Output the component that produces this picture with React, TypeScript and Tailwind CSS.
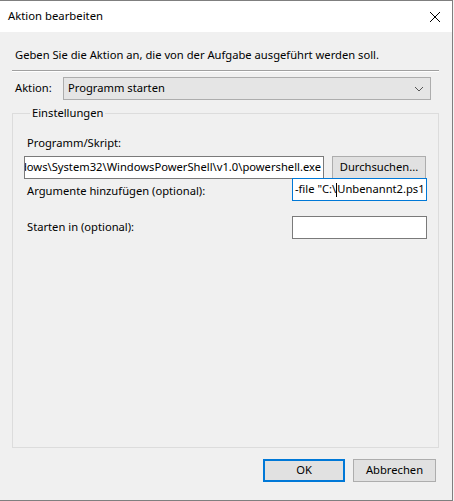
import React from "react";

const font = { fontFamily: '"Noto Sans", "Liberation Sans", sans-serif' };

function TextBox({
  children,
  focused,
  className,
}: {
  children?: React.ReactNode;
  focused?: boolean;
  className?: string;
}) {
  return (
    <div
      className={
        "flex h-[23px] items-center overflow-hidden whitespace-nowrap bg-white px-[2px] text-black " +
        (focused ? "border border-[#0078d7] " : "border border-[#7a7a7a] ") +
        (className ?? "")
      }
    >
      {children}
    </div>
  );
}

export default function App() {
  return (
    <div className="flex h-[501px] w-[454px] bg-[#f4f4f4]" style={font}>
      <div className="flex h-[501px] w-[453px] flex-col border-b border-r border-t border-[#7f7f7f]">
        {/* title bar */}
        <div className="flex h-[31px] items-center justify-between bg-white pl-[8px] pr-[10px]">
          <span className="text-[11.3px] text-black">Aktion bearbeiten</span>
          <svg width="12" height="12" viewBox="0 0 12 12" className="mr-[1px]">
            <path d="M1 1 L11 11 M11 1 L1 11" stroke="#000" strokeWidth="1" />
          </svg>
        </div>

        {/* body */}
        <div className="flex flex-1 flex-col bg-[#f0f0f0] px-[12px] text-[11.2px] text-black">
          <p className="mt-[15px] pl-[3px] leading-[16px]">
            Geben Sie die Aktion an, die von der Aufgabe ausgeführt werden soll.
          </p>
          <div className="mt-[7px] h-[2px] w-[427px] border-t border-[#a0a0a0] bg-white" />

          <div className="mt-[5px] flex items-center">
            <span className="w-[51px] pl-[3px]">Aktion:</span>
            <div className="flex h-[23px] w-[368px] items-center justify-between border border-[#adadad] bg-[#e5e5e5] pl-[4px] pr-[6px]">
              <span>Programm starten</span>
              <svg width="10" height="6" viewBox="0 0 10 6">
                <path d="M1 1 L5 5 L9 1" stroke="#555" strokeWidth="1" fill="none" />
              </svg>
            </div>
          </div>

          <fieldset className="mt-[5px] h-[343px] w-[427px] border border-[#dcdcdc] pl-[11px] pr-[12px]">
            <legend className="ml-[6px] px-[2px] leading-[16px]">Einstellungen</legend>

            <div className="mt-[14px] pl-[3px] leading-[16px]">Programm/Skript:</div>
            <div className="mt-[5px] flex items-center gap-[8px]">
              <TextBox className="w-[300px] justify-end">
                <span className="shrink-0">C:\Windows\System32\WindowsPowerShell\v1.0\powershell.exe</span>
              </TextBox>
              <button className="flex h-[23px] w-[94px] items-center justify-center border border-[#adadad] bg-[#e1e1e1]">
                Durchsuchen...
              </button>
            </div>

            <div className="-mt-[1px] flex items-center justify-between">
              <span className="pl-[3px] pt-[3px]">Argumente hinzufügen (optional):</span>
              <TextBox focused className="mr-[-1px] w-[135px]">
                <span className="shrink-0">-file "C:\</span>
                <span className="h-[14px] w-[1px] shrink-0 bg-black" />
                <span className="shrink-0">Unbenannt2.ps1</span>
              </TextBox>
            </div>

            <div className="mt-[15px] flex items-center justify-between">
              <span className="pl-[3px]">Starten in (optional):</span>
              <TextBox className="mr-[-1px] w-[135px]" />
            </div>
          </fieldset>

          <div className="mt-[11px] flex justify-end gap-[8px] pr-[4px]">
            <button className="flex h-[23px] w-[82px] items-center justify-center border-2 border-[#0078d7] bg-[#e1e1e1]">
              OK
            </button>
            <button className="flex h-[23px] w-[83px] items-center justify-center border border-[#adadad] bg-[#e1e1e1]">
              Abbrechen
            </button>
          </div>
        </div>
      </div>
    </div>
  );
}
